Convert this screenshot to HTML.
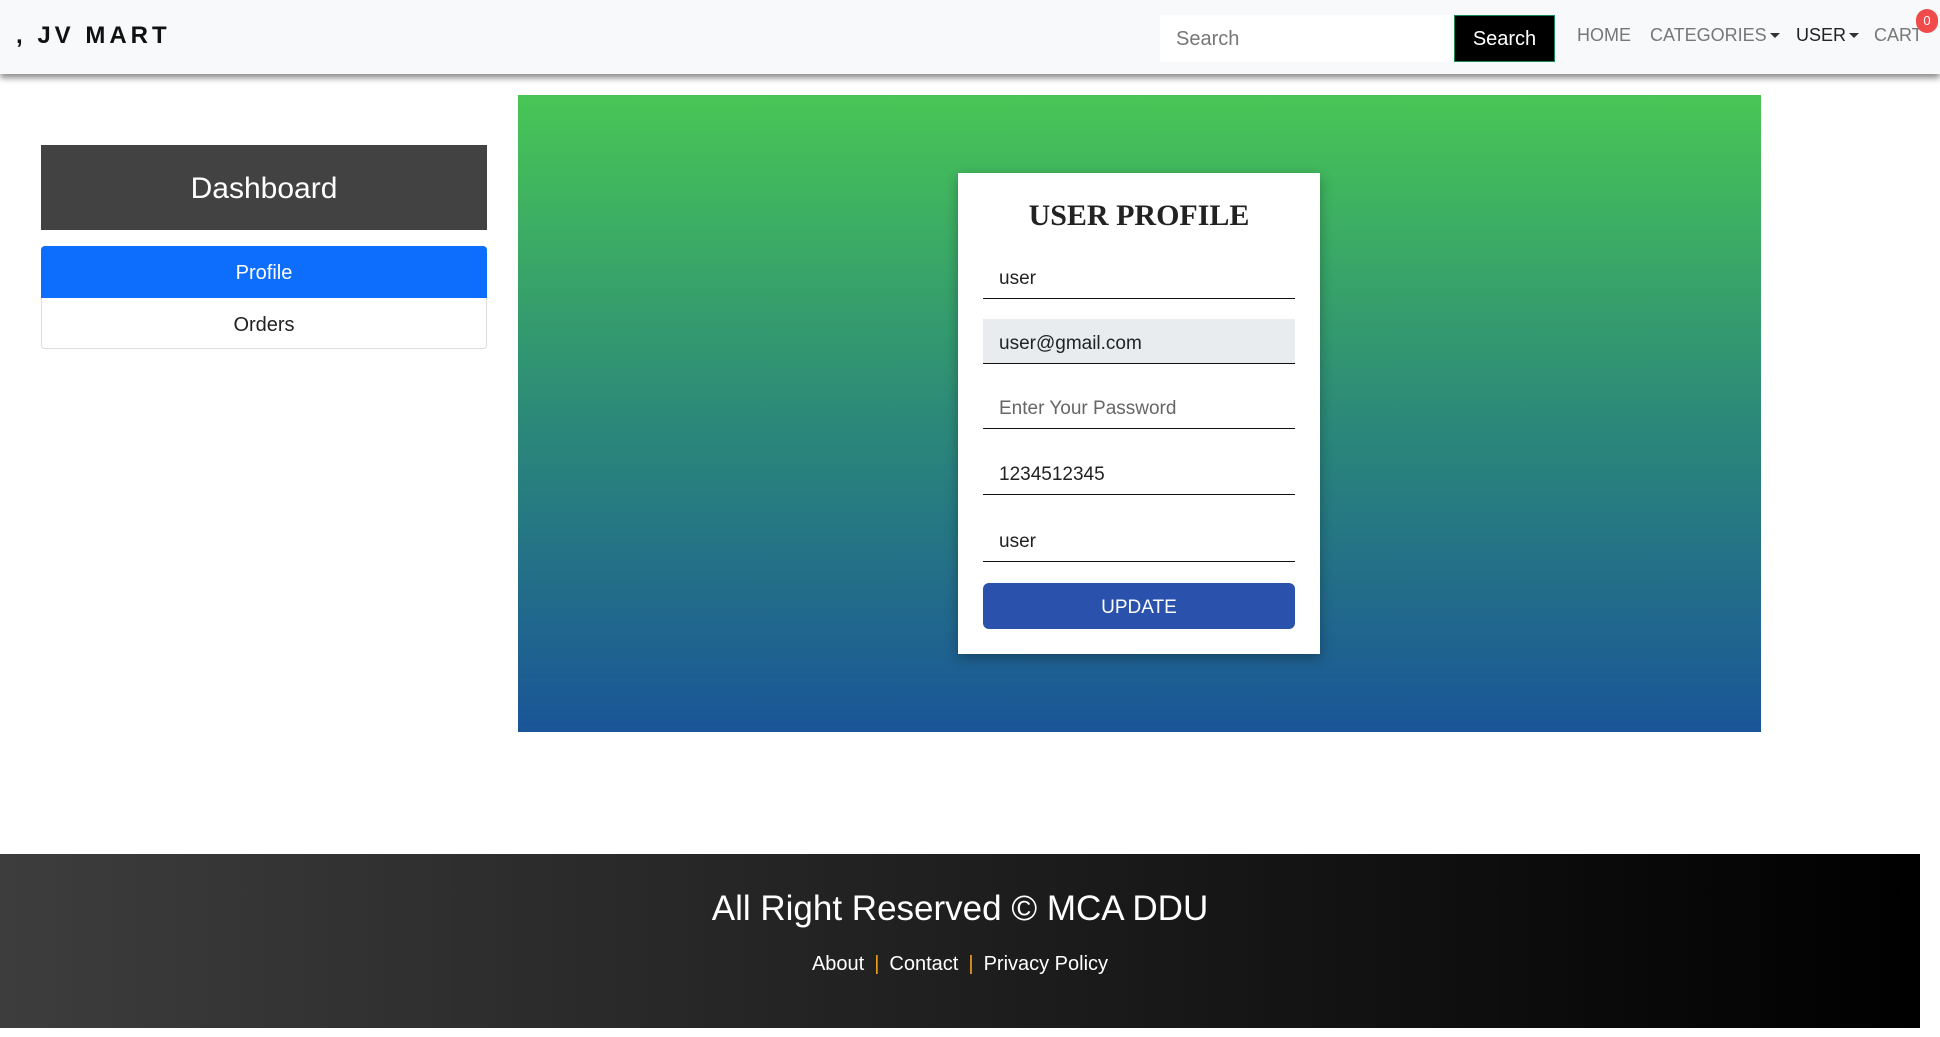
<!DOCTYPE html>
<html><head><meta charset="utf-8"><style>
*{box-sizing:border-box;margin:0;padding:0}
body{width:1940px;height:1037px;background:#fff;font-family:"Liberation Sans",sans-serif;position:relative;overflow:hidden}
.nav{position:absolute;left:0;top:0;width:1940px;height:74px;background:#f8f9fa;box-shadow:0 4px 6px rgba(0,0,0,.45)}
.brand{position:absolute;left:16px;top:22px;font-size:24px;font-weight:bold;letter-spacing:4px;color:#111}
.srch{position:absolute;left:1160px;top:15px;width:290px;height:47px;background:#fff;color:#777;font-size:20px;padding:13px 16px}
.sbtn{position:absolute;left:1454px;top:15px;width:101px;height:47px;background:#000;border:1px solid #198754;color:#fff;font-size:20px;text-align:center;line-height:47px}
.nl{position:absolute;top:25px;font-size:18px;color:#777}
.car{display:inline-block;width:0;height:0;border-left:5px solid transparent;border-right:5px solid transparent;border-top:5px solid #333;vertical-align:3px;margin-left:3px}
.badge{position:absolute;left:1916px;top:9px;width:22px;height:24px;border-radius:11px;background:#f04a4a;color:#fff;font-size:13px;text-align:center;line-height:24px}
.green{position:absolute;left:518px;top:95px;width:1243px;height:637px;background:linear-gradient(#48c655,#2c8a78 50%,#1a5598)}
.dash{position:absolute;left:41px;top:145px;width:446px;height:85px;background:#424242;color:#fff;font-size:30px;text-align:center;line-height:88px}
.prof{position:absolute;left:41px;top:246px;width:446px;height:52px;background:#0d6efd;color:#fff;font-size:20px;text-align:center;line-height:54px;border-radius:4px 4px 0 0}
.ord{position:absolute;left:41px;top:298px;width:446px;height:51px;border:1px solid #ddd;border-top:none;color:#222;font-size:20px;text-align:center;line-height:54px;border-radius:0 0 4px 4px}
.card{position:absolute;left:958px;top:173px;width:362px;height:481px;background:#fff;box-shadow:0 4px 12px rgba(0,0,0,.3)}
.title{position:absolute;left:0;width:100%;top:26px;text-align:center;font-family:"Liberation Serif",serif;font-weight:bold;font-size:30px;color:#222}
.in{position:absolute;left:25px;width:312px;height:45px;border-bottom:1.5px solid #111;font-size:19px;color:#222;padding:14px 16px 0}
.btn{position:absolute;left:25px;top:410px;width:312px;height:46px;background:#2a52ad;color:#fff;border-radius:6px;font-size:19px;text-align:center;line-height:50px}
.foot{position:absolute;left:0;top:854px;width:1920px;height:174px;background:linear-gradient(90deg,#3d3d3d,#000);color:#fff;text-align:center}
.ft{margin-top:35px;font-size:35px}
.fl{margin-top:24px;font-size:20px}
.fl span{color:#f0a020;margin:0 10px}
</style></head><body>
<div class="nav">
<div class="brand">, JV MART</div>
<div class="srch">Search</div>
<div class="sbtn">Search</div>
<div class="nl" style="left:1577px">HOME</div>
<div class="nl" style="left:1650px">CATEGORIES<span class="car"></span></div>
<div class="nl" style="left:1796px;color:#222">USER<span class="car"></span></div>
<div class="nl" style="left:1874px">CART</div>
<div class="badge">0</div>
</div>
<div class="green"></div>
<div class="dash">Dashboard</div>
<div class="prof">Profile</div>
<div class="ord">Orders</div>
<div class="card">
<div class="title">USER PROFILE</div>
<div class="in" style="top:81px">user</div>
<div class="in" style="top:146px;background:#e9ecef">user@gmail.com</div>
<div class="in" style="top:211px;color:#666">Enter Your Password</div>
<div class="in" style="top:277px">1234512345</div>
<div class="in" style="top:344px">user</div>
<div class="btn">UPDATE</div>
</div>
<div class="foot">
<div class="ft">All Right Reserved © MCA DDU</div>
<div class="fl">About<span>|</span>Contact<span>|</span>Privacy Policy</div>
</div>
</body></html>
